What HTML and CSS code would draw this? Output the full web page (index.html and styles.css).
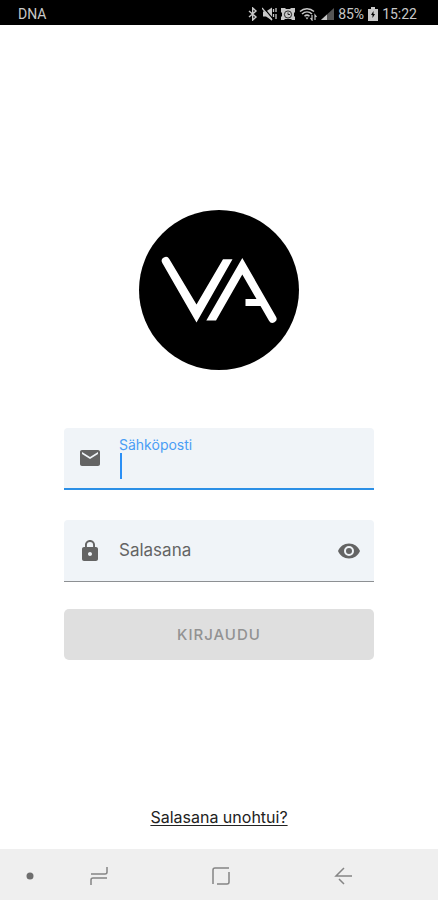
FILE: index.html
```html
<!DOCTYPE html>
<html lang="fi">
<head>
<meta charset="utf-8">
<meta name="viewport" content="width=device-width, initial-scale=1">
<title>Kirjaudu</title>
<link rel="stylesheet" href="styles.css">
</head>
<body>
<header class="status">
  <span class="carrier">DNA</span>
  <div class="status-icons">
    <svg width="10" height="14" viewBox="0 0 10 14" fill="none" stroke="currentColor" stroke-width="1.4"><path d="M1 4l7 6-3.300 3V1L8 4l-7 6"/></svg>
    <svg width="15" height="14" viewBox="0 0 15 14"><path d="M1 4.500h3l6-4v13l-6-4H1z" fill="currentColor"/><path d="M1 0l10 12" stroke="#000" stroke-width="1.200"/><path d="M0 1l10 12" stroke="currentColor" stroke-width="1.300"/><path d="M11.500 2v3m0 2v3M14 1v4m0 2v5" stroke="currentColor" stroke-width="1.300"/></svg>
    <svg width="14" height="14" viewBox="0 0 14 14"><path d="M0 1h4l1 1h4l1-1h4v4l-1 1v3l1 1v3h-3l-1-1H4l-1 1H0v-3l1-1V6L0 5z" fill="currentColor"/><circle cx="7" cy="7.500" r="3.600" fill="none" stroke="#000" stroke-width=".8"/><path d="M7 5.500v2h2" fill="none" stroke="#000" stroke-width=".8"/></svg>
    <svg width="18" height="14" viewBox="0 0 18 14" fill="none" stroke="currentColor" stroke-width="1.500"><path d="M1 4.500c4-3.700 10-3.700 14 0M3 7c3-2.700 7-2.700 10 0M5.500 9.300c1.500-1.400 3.500-1.400 5 0"/><path d="M6.500 10.500h3L8 12.500z" fill="currentColor" stroke="none"/><path d="M13 8v5l-1.500-2M16 13V8l1.500 2" stroke-width="1.200"/></svg>
    <svg width="13" height="14" viewBox="0 0 13 14"><path d="M13 1v12H0z" fill="#555"/><path d="M6 7.500V13H0z" fill="currentColor"/></svg>
    <span>85%</span>
    <svg width="10" height="14" viewBox="0 0 10 14"><path d="M3 0h4v2h3v12H0V2h3z" fill="currentColor"/><path d="M5.500 4L3 8h1.500v3L7 7H5.500z" fill="#000"/></svg>
    <time>15:22</time>
  </div>
</header>

<main class="screen">
  <svg class="logo" viewBox="0 0 160 160" role="img" aria-label="VA">
    <circle cx="80" cy="80" r="80"/>
    <path class="shape" d="M23.300 53A4 4 0 0 1 30.300 49L57.500 94.500 84 49.300h9.500L57.500 112.500z"/>
    <path class="shape" d="M67.300 110.500H77L103.300 64.500 117.500 89h-11v7h15L130 110.700A4 4 0 0 0 137 106.700L103.300 48z"/>
  </svg>

  <form class="form">
    <div class="field field-active">
      <svg class="icon" viewBox="0 0 24 24" aria-hidden="true"><path d="M20 4H4c-1.100 0-2 .9-2 2v12c0 1.100.9 2 2 2h16c1.100 0 2-.9 2-2V6c0-1.100-.9-2-2-2zm0 4l-8 5-8-5V6l8 5 8-5z"/></svg>
      <div class="entry">
        <label for="email">Sähköposti</label>
        <span class="caret"></span>
        <input id="email" type="email">
      </div>
    </div>
    <div class="field">
      <svg class="icon" viewBox="0 0 24 24" aria-hidden="true"><path d="M18 8h-1V6c0-2.760-2.240-5-5-5S7 3.240 7 6v2H6c-1.100 0-2 .9-2 2v10c0 1.100.9 2 2 2h12c1.100 0 2-.9 2-2V10c0-1.100-.9-2-2-2zm-6 9c-1.100 0-2-.9-2-2s.9-2 2-2 2 .9 2 2-.9 2-2 2zM8.900 8V6a3.100 3.100 0 0 1 6.200 0v2z"/></svg>
      <div class="entry">
        <label for="password">Salasana</label>
        <input id="password" type="password">
      </div>
      <button class="reveal" type="button" aria-label="Näytä salasana">
        <svg class="icon" viewBox="0 0 24 24"><path d="M12 4.500C7 4.500 2.730 7.610 1 12c1.730 4.390 6 7.500 11 7.500s9.270-3.110 11-7.500c-1.730-4.390-6-7.500-11-7.500zM12 17a5 5 0 1 1 0-10 5 5 0 0 1 0 10zm0-8a3 3 0 1 0 0 6 3 3 0 0 0 0-6z"/></svg>
      </button>
    </div>
    <button class="submit" type="submit" disabled>KIRJAUDU</button>
  </form>

  <a class="forgot" href="#">Salasana unohtui?</a>
</main>

<nav class="navbar">
  <button class="pin" type="button" aria-label="Piilota"><svg width="16" height="24" viewBox="0 0 16 24"><circle cx="8" cy="12" r="3.500"/></svg></button>
  <button type="button" aria-label="Viimeisimmät"><svg class="nav-icon" viewBox="0 0 24 24"><path d="M4 10h14q2 0 2-2V3M20 14H6q-2 0-2 2v5"/></svg></button>
  <button type="button" aria-label="Koti"><svg class="nav-icon" viewBox="0 0 24 24"><path d="M4 20V6q0-2 2-2h14M20 8v10q0 2-2 2H8"/></svg></button>
  <button type="button" aria-label="Takaisin"><svg class="nav-icon" viewBox="0 0 24 24"><path d="M20 12H4l8-8M7 15l5 5"/></svg></button>
</nav>
</body>
</html>
```
FILE: styles.css
```css
* { box-sizing: border-box; }

body {
  margin: 0;
  min-height: 100vh;
  display: flex;
  flex-direction: column;
  background: #fff;
  font-family: Inter, "Open Sans", sans-serif;
}

button { padding: 0; border: 0; background: none; font: inherit; }
svg { display: block; }

.status {
  display: flex;
  align-items: center;
  justify-content: space-between;
  height: 25px;
  padding: 3px 21px 0 18px;
  background: #000;
  color: #c8c8c8;
  font: 14px/20px Roboto, sans-serif;
}

.status-icons { display: flex; align-items: center; gap: 4px; }

.screen {
  flex: 1;
  display: flex;
  flex-direction: column;
  align-items: center;
  padding: 185px 64px 22px;
}

.logo { width: 160px; height: 160px; }
.logo .shape { fill: #fff; }

.form {
  width: 100%;
  display: flex;
  flex-direction: column;
  margin: 58px 0 32px;
}

.field {
  display: flex;
  align-items: center;
  gap: 16px;
  height: 62px;
  margin-bottom: 30px;
  padding: 0 13px 0 14px;
  border-bottom: 1px solid #8d9093;
  border-radius: 4px 4px 0 0;
  background: #f0f4f8;
}
.field + .field { margin-bottom: 27px; }
.field-active { border-bottom: 2px solid #2b8fe6; }

.icon { width: 24px; height: 24px; flex: none; fill: #646464; }

.entry { position: relative; flex: 1; min-width: 0; height: 100%; }
.entry input {
  width: 100%;
  height: 100%;
  padding: 20px 0 4px;
  border: 0;
  outline: 0;
  background: none;
  font: inherit;
}
.entry label {
  position: absolute;
  top: 20px;
  left: 1px;
  color: #646464;
  font-size: 17px;
  line-height: 20px;
}
.field-active .entry label {
  top: 9px;
  color: #4a9df5;
  font-size: 14px;
  line-height: 16px;
}
.caret {
  position: absolute;
  top: 25px;
  left: 2px;
  width: 2px;
  height: 26px;
  background: #2b8ff5;
}

.submit {
  height: 51px;
  border-radius: 5px;
  background: #dfdfdf;
  color: #929292;
  font-size: 15px;
  font-weight: 500;
  letter-spacing: 1px;
}

.forgot {
  margin-top: auto;
  color: #222;
  font-size: 16px;
  line-height: 20px;
  text-underline-offset: 2px;
  text-decoration-thickness: 1px;
}

.navbar {
  display: grid;
  grid-template-columns: 38px 1fr 1fr 1fr;
  align-items: center;
  justify-items: center;
  height: 51px;
  padding: 2px 33px 0 0;
  background: #efefef;
}
.pin { justify-self: end; fill: #6e6e6e; }
.nav-icon {
  width: 24px;
  height: 24px;
  fill: none;
  stroke: #858585;
  stroke-width: 1.5px;
}
```
